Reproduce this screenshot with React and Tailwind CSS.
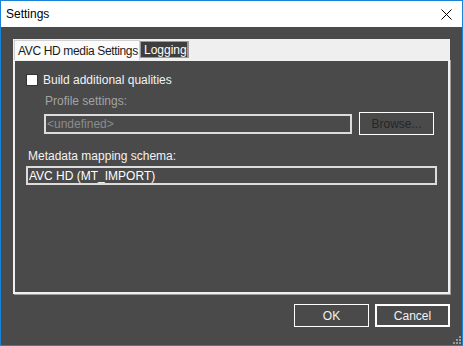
import React from 'react';

const font = { fontFamily: '"Liberation Sans", Arial, sans-serif' };

function Field({ children, className }) {
  return (
    <div className={'flex items-center border-2 border-[#dcdcdc] bg-[#4a4a4a] px-[1px] text-[12px] whitespace-nowrap ' + className}>
      {children}
    </div>
  );
}

export default function App() {
  return (
    <div className="w-[463px] h-[346px] flex flex-col border border-[#1883d7] bg-[#4a4a4a] text-[12px]" style={font}>
      {/* title bar */}
      <div className="h-[26px] bg-white flex items-center justify-between pl-[5px] pr-[10px]">
        <span className="text-black text-[12px]">Settings</span>
        <svg width="11" height="11" viewBox="0 0 11 11" className="mt-[1px]">
          <path d="M0.5 0.5 L10.5 10.5 M10.5 0.5 L0.5 10.5" stroke="#000" strokeWidth="1" />
        </svg>
      </div>

      <div className="flex-1 flex flex-col pl-[12px] pr-[12px] pt-[12px]">
        {/* tab strip */}
        <div className="w-[437px] h-[20px] bg-[#efefef] flex items-end pl-[1px]">
          <div className="h-[20px] w-[126px] bg-[#fbfbfb] border border-b-0 border-[#d0d0d0] flex items-center pl-[3px] text-[#1a1a1a] whitespace-nowrap tracking-[-0.35px] relative z-10 -mb-[1px]">
            AVC HD media Settings
          </div>
          <div className="h-[17px] w-[49px] bg-[#3e3e3e] border border-[#9a9a9a] border-r-2 flex items-center pl-[3px] text-white whitespace-nowrap mb-[1px]">
            Logging
          </div>
        </div>

        {/* tab panel */}
        <div className="w-[437px] h-[235px] border-2 border-[#f0f0f0] shadow-[1px_1px_0_#9c9c9c] flex flex-col pl-[11px] pt-[12px]">
          <div className="flex items-center h-[13px]">
            <div className="w-[12px] h-[12px] bg-white border border-[#333]" />
            <span className="ml-[5px] text-[#f2f2f2]">Build additional qualities</span>
          </div>
          <div className="ml-[19px] mt-[8px] text-[#a3a3a3] leading-[14px]">Profile settings:</div>
          <div className="flex items-center ml-[18px] mt-[4px]">
            <Field className="w-[308px] h-[20px] text-[#8c8c8c]">&lt;undefined&gt;</Field>
            <div className="ml-[7px] w-[75px] h-[23px] border border-white flex items-center justify-center text-[#262626]">
              Browse...
            </div>
          </div>
          <div className="ml-[2px] mt-[14px] text-[#f2f2f2] leading-[14px]">Metadata mapping schema:</div>
          <Field className="mt-[3px] w-[411px] h-[19px] text-white">AVC HD (MT_IMPORT)</Field>
        </div>

        {/* footer buttons */}
        <div className="flex justify-end gap-[6px] mt-[10px] w-[437px]">
          <div className="w-[75px] h-[23px] border border-white flex items-center justify-center text-[#f2f2f2]">OK</div>
          <div className="w-[75px] h-[23px] border-2 border-white flex items-center justify-center text-[#f2f2f2]">Cancel</div>
        </div>
        <div className="flex justify-end mt-auto -mr-[11px] mb-[1px]">
          <svg width="9" height="9" viewBox="0 0 9 9">
            <rect x="7" y="1" width="2" height="2" fill="#9a9a9a" />
            <rect x="4" y="4" width="2" height="2" fill="#9a9a9a" />
            <rect x="7" y="4" width="2" height="2" fill="#9a9a9a" />
            <rect x="1" y="7" width="2" height="2" fill="#9a9a9a" />
            <rect x="4" y="7" width="2" height="2" fill="#9a9a9a" />
            <rect x="7" y="7" width="2" height="2" fill="#9a9a9a" />
          </svg>
        </div>
      </div>
    </div>
  );
}
